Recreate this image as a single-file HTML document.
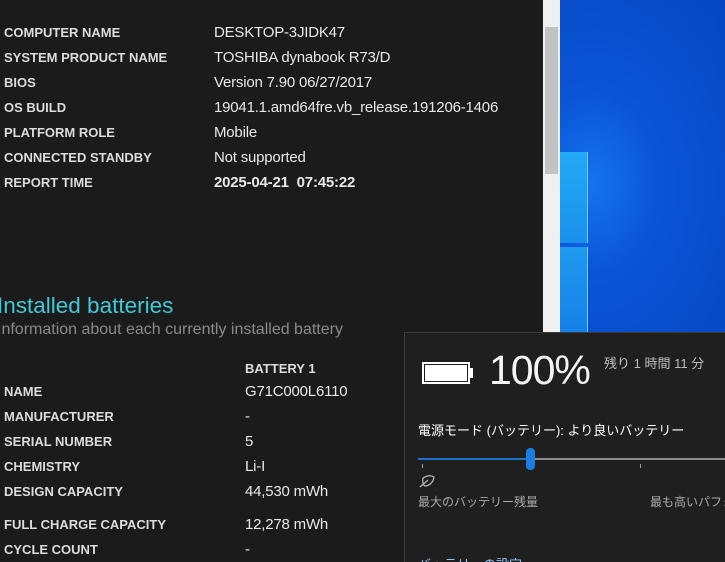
<!DOCTYPE html>
<html><head><meta charset="utf-8"><style>
*{margin:0;padding:0;box-sizing:border-box}
html,body{width:725px;height:562px;overflow:hidden}
body{background:#1b1b1b;position:relative;font-family:"Liberation Sans","Noto Sans CJK JP",sans-serif;color:#e6e6e6}
.a{position:absolute;white-space:nowrap}
.l{font-size:13px;font-weight:bold;color:#dcdcdc;left:4px}
.v{font-size:15px;color:#e8e8e8;letter-spacing:-0.2px}
</style></head><body>
<div class="a l" style="top:25px">COMPUTER NAME</div><div class="a v" style="left:214px;top:24px">DESKTOP-3JIDK47</div>
<div class="a l" style="top:50px">SYSTEM PRODUCT NAME</div><div class="a v" style="left:214px;top:49px">TOSHIBA dynabook R73/D</div>
<div class="a l" style="top:75px">BIOS</div><div class="a v" style="left:214px;top:74px">Version 7.90 06/27/2017</div>
<div class="a l" style="top:100px">OS BUILD</div><div class="a v" style="left:214px;top:99px">19041.1.amd64fre.vb_release.191206-1406</div>
<div class="a l" style="top:125px">PLATFORM ROLE</div><div class="a v" style="left:214px;top:124px">Mobile</div>
<div class="a l" style="top:150px">CONNECTED STANDBY</div><div class="a v" style="left:214px;top:149px">Not supported</div>
<div class="a l" style="top:175px">REPORT TIME</div><div class="a v" style="left:214px;top:174px;font-weight:bold">2025-04-21&nbsp; 07:45:22</div>
<div class="a" style="left:-3px;top:293px;font-size:22.5px;color:#3fc8d8">Installed batteries</div>
<div class="a" style="left:-3px;top:321px;font-size:16px;color:#8a8a8a">Information about each currently installed battery</div>
<div class="a l" style="left:245px;top:361px">BATTERY 1</div>
<div class="a l" style="top:384px">NAME</div><div class="a v" style="left:245px;top:383px">G71C000L6110</div>
<div class="a l" style="top:409px">MANUFACTURER</div><div class="a v" style="left:245px;top:408px">-</div>
<div class="a l" style="top:434px">SERIAL NUMBER</div><div class="a v" style="left:245px;top:433px">5</div>
<div class="a l" style="top:459px">CHEMISTRY</div><div class="a v" style="left:245px;top:458px">Li-I</div>
<div class="a l" style="top:484px">DESIGN CAPACITY</div><div class="a v" style="left:245px;top:483px">44,530 mWh</div>
<div class="a l" style="top:517px">FULL CHARGE CAPACITY</div><div class="a v" style="left:245px;top:516px">12,278 mWh</div>
<div class="a l" style="top:542px">CYCLE COUNT</div><div class="a v" style="left:245px;top:541px">-</div>
<div class="a" style="left:543px;top:0;width:17px;height:333px;background:#f0f0f0"></div>
<div class="a" style="left:545px;top:27px;width:13px;height:147px;background:#c2c2c2"></div>
<div class="a" style="left:560px;top:0;width:165px;height:333px;background:radial-gradient(ellipse at 20% 55%,#1673f0 0%,#0a55d6 35%,#0646c2 100%)"></div>
<div class="a" style="left:560px;top:152px;width:28px;height:91px;background:linear-gradient(#22aaf5,#1a90ee);border-right:1px solid #6fd0ff"></div>
<div class="a" style="left:560px;top:247px;width:28px;height:86px;background:linear-gradient(#1e9af0,#1680e8);border-right:1px solid #6fd0ff"></div>
<div class="a" style="left:404px;top:332px;width:321px;height:230px;background:#1f1f1f;border-left:1px solid #3a3a3a;border-top:1px solid #3a3a3a;overflow:hidden">
<div class="a" style="left:17px;top:29px;width:48px;height:22px;border:2px solid #fff"></div>
<div class="a" style="left:20px;top:32px;width:42px;height:16px;background:#fff"></div>
<div class="a" style="left:65px;top:35px;width:3px;height:10px;background:#fff"></div>
<div class="a" style="left:84px;top:14px;font-size:41px;color:#f4f4f4;letter-spacing:-1px">100%</div>
<div class="a" style="left:199px;top:20px;font-size:13px;color:#bdbdbd">残り 1 時間 11 分</div>
<div class="a" style="left:13px;top:87px;font-size:13px;color:#fff">電源モード (バッテリー): より良いバッテリー</div>
<div class="a" style="left:13px;top:125px;width:113px;height:2px;background:#1a73c8"></div>
<div class="a" style="left:126px;top:125px;width:195px;height:2px;background:#8a8a8a"></div>
<div class="a" style="left:121px;top:115px;width:9px;height:22px;border-radius:4px;background:#1a7ee0"></div>
<div class="a" style="left:17px;top:131px;width:1px;height:4px;background:#999"></div>
<div class="a" style="left:235px;top:131px;width:1px;height:4px;background:#999"></div>
<svg class="a" style="left:13px;top:142px" width="18" height="14" viewBox="0 0 18 14"><path d="M2 12 L10 5 M5 3 Q11 -1 16 2 Q15 9 8 11 Q4 11 5 3Z" fill="none" stroke="#bbb" stroke-width="1.2"/></svg>
<div class="a" style="left:13px;top:160px;font-size:12px;color:#aaa">最大のバッテリー残量</div>
<div class="a" style="left:245px;top:160px;font-size:12px;color:#aaa">最も高いパフォーマンス</div>
<div class="a" style="left:13px;top:221px;font-size:13px;color:#8fc6ff">バッテリーの設定</div>
</div>
</body></html>
